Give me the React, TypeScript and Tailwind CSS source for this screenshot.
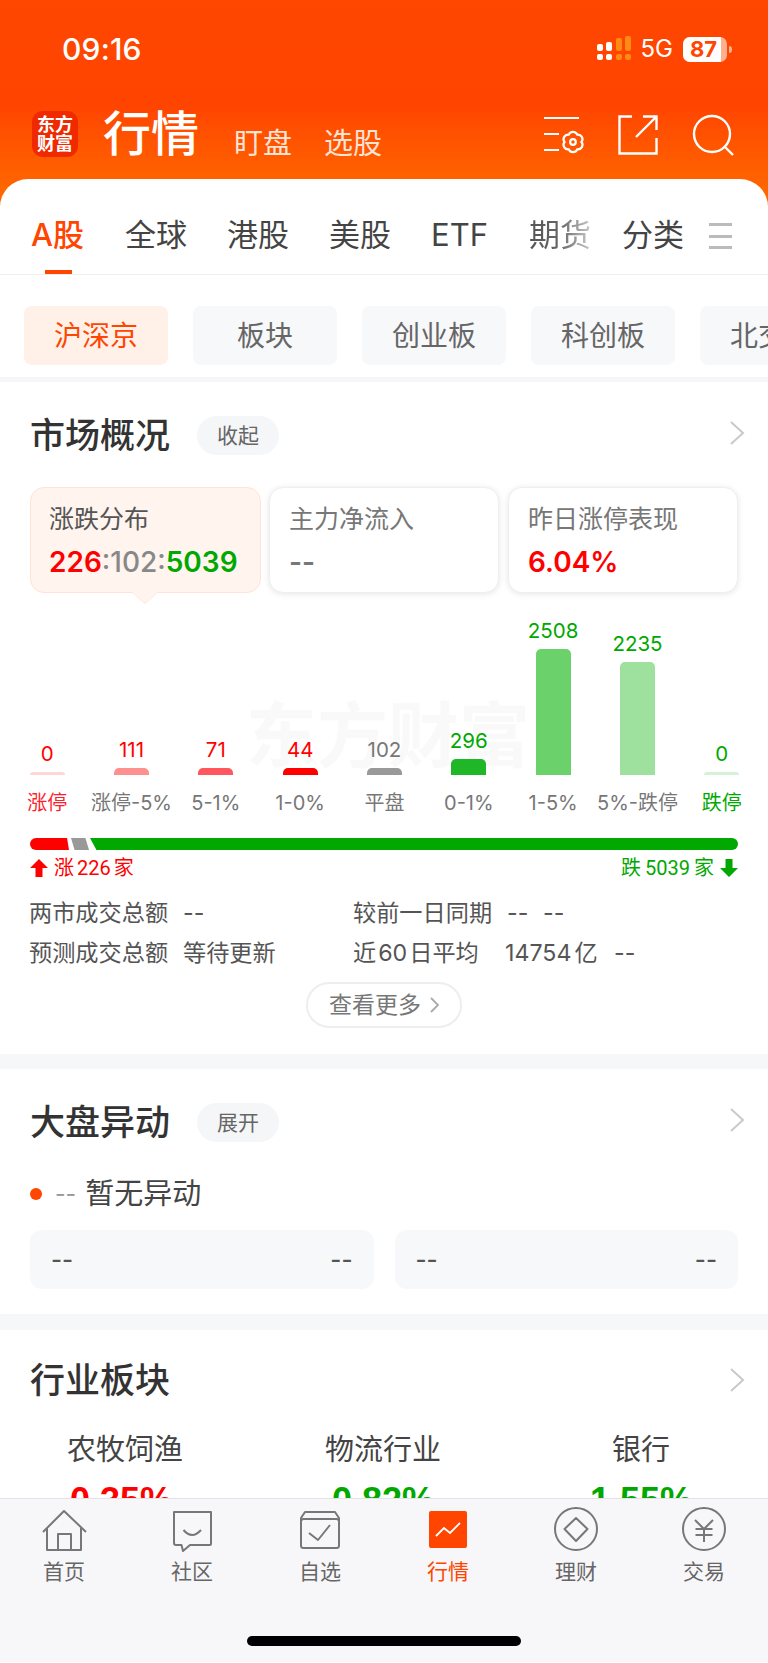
import React from "react";

const Chevron = ({ className = "" }: { className?: string }) => (
  <svg width="16" height="24" viewBox="0 0 16 24" fill="none" className={className}>
    <polyline points="2,1 14,12 2,23" stroke="#c9c9c9" strokeWidth="2" />
  </svg>
);

const SectionTitle = ({ title, pill }: { title: string; pill?: string }) => (
  <div className="flex items-center h-[38px] pl-[30px] pr-[23px]">
    <div className="text-[35px] leading-[38px] font-medium text-[#333]">{title}</div>
    {pill && (
      <div className="ml-[27px] w-[82px] h-[39px] rounded-full bg-[#f5f6f8] text-[21px] leading-[39px] text-center text-[#666]">
        {pill}
      </div>
    )}
    <Chevron className={pill ? "ml-auto -mt-[5px]" : "ml-auto"} />
  </div>
);

const chips = ["板块", "创业板", "科创板", "北交所"];

const bars = [
  { v: "0", h: 3, c: "bg-[#ffd6d6]", t: "text-[#ff0000]", l: "涨停", lc: "text-[#ff1f2d]" },
  { v: "111", h: 7, c: "bg-[#ff9090]", t: "text-[#ff0000]", l: "涨停-5%", lc: "text-[#777]" },
  { v: "71", h: 7, c: "bg-[#ff5660]", t: "text-[#ff0000]", l: "5-1%", lc: "text-[#777]" },
  { v: "44", h: 7, c: "bg-[#ff0000]", t: "text-[#ff0000]", l: "1-0%", lc: "text-[#777]" },
  { v: "102", h: 7, c: "bg-[#999999]", t: "text-[#777]", l: "平盘", lc: "text-[#777]" },
  { v: "296", h: 16, c: "bg-[#1fb728]", t: "text-[#00a800]", l: "0-1%", lc: "text-[#777]" },
  { v: "2508", h: 126, c: "bg-[#6bd16b]", t: "text-[#00a800]", l: "1-5%", lc: "text-[#777]" },
  { v: "2235", h: 113, c: "bg-[#9ee09e]", t: "text-[#00a800]", l: "5%-跌停", lc: "text-[#777]" },
  { v: "0", h: 3, c: "bg-[#d6f2d6]", t: "text-[#00a800]", l: "跌停", lc: "text-[#00a800]" },
];

const Icon = ({ children }: { children: React.ReactNode }) => (
  <svg width="48" height="48" viewBox="0 0 48 48" fill="none" stroke="#777" strokeWidth="2" strokeLinejoin="round">
    {children}
  </svg>
);

const nav: { label: string; active?: boolean; icon: React.ReactNode }[] = [
  {
    label: "首页",
    icon: (
      <Icon>
        <path d="M3 26 L24 5 L46 26" />
        <path d="M7 22 V44 H41 V22" />
        <path d="M18 44 V28 H31 V44" />
      </Icon>
    ),
  },
  {
    label: "社区",
    icon: (
      <Icon>
        <path d="M7 6 H43 V38 Q43 39 42 39 H22 L15 45 L13.500 39 H8 Q6 39 6 37 V6 Z" />
        <path d="M15.500 24 Q24 34 33 24" />
      </Icon>
    ),
  },
  {
    label: "自选",
    icon: (
      <Icon>
        <rect x="5" y="13" width="38" height="29" rx="2.500" />
        <path d="M5 15 V12 L9 6 H39 L43 12 V15" />
        <path d="M13 27 L22 34 L34 19" />
      </Icon>
    ),
  },
  {
    label: "行情",
    active: true,
    icon: (
      <svg width="48" height="48" viewBox="0 0 48 48" fill="none">
        <rect x="5" y="5" width="38" height="37" rx="2" fill="#ff4500" />
        <path d="M12 30 L20 22 L26 27 L36 17" stroke="#fff" strokeWidth="1.800" />
      </svg>
    ),
  },
  {
    label: "理财",
    icon: (
      <Icon>
        <circle cx="24" cy="23" r="21" />
        <path d="M24 12 L35.500 23 L24 35 L12.500 23 Z" />
      </Icon>
    ),
  },
  {
    label: "交易",
    icon: (
      <Icon>
        <circle cx="24" cy="23" r="21" />
        <path d="M15 14 L24 23 L33 14 M15.500 23 H32.500 M15.500 29 H32.500 M24 23 V36" />
      </Icon>
    ),
  },
];

const UpArrow = () => (
  <svg width="18" height="18" viewBox="0 0 18 18">
    <path d="M9 0 L18 9 H12.500 V18 H5.500 V9 H0 Z" fill="#ff0000" />
  </svg>
);
const DownArrow = () => (
  <svg width="18" height="18" viewBox="0 0 18 18">
    <path d="M5.500 0 H12.500 V9 H18 L9 18 L0 9 H5.500 Z" fill="#00a800" />
  </svg>
);

export default function App() {
  return (
    <div className="w-[768px] h-[1663px] overflow-hidden flex flex-col bg-white font-['Inter','Noto_Sans_CJK_SC',sans-serif]">
      <div className="h-[209px] shrink-0 bg-gradient-to-b from-[#ff4700] via-[#ff4400] via-50% to-[#ff6c00]">
        <div className="h-[98px] flex items-center pl-[62px] pr-[36px] text-white">
          <div className="text-[30px] leading-[36px] font-medium tracking-[0.2px]">09:16</div>
          <svg width="36" height="26" viewBox="0 0 36 26" className="ml-auto">
            <rect x="0" y="8" width="6" height="7" rx="2" fill="#fff" />
            <rect x="9" y="6" width="6" height="9" rx="2" fill="#fff" />
            <rect x="19" y="2" width="6" height="13" rx="2" fill="#ff8a14" />
            <rect x="28" y="0" width="6" height="15" rx="2" fill="#ff8a14" />
            <rect x="0" y="18" width="6" height="6" rx="2" fill="#fff" />
            <rect x="9" y="18" width="6" height="6" rx="2" fill="#fff" />
            <rect x="19" y="18" width="6" height="6" rx="2" fill="#ff8a14" />
            <rect x="28" y="18" width="6" height="6" rx="2" fill="#ff8a14" />
          </svg>
          <div className="ml-[8px] text-[24px] leading-[26px] font-normal">5G</div>
          <div className="ml-[10px] w-[44px] h-[25px] rounded-[7px] bg-[#ffb08c] overflow-hidden">
            <div className="w-[38px] h-[25px] pl-[3px] bg-white text-[#ff4500] text-[22px] leading-[25px] font-bold text-center">87</div>
          </div>
          <div className="ml-[2px] w-[3px] h-[7px] rounded-r-full bg-[#ffb08c]" />
        </div>
        <div className="flex items-center pl-[32px] pr-[35px] h-[60px] mt-[6px]">
          <div className="w-[46px] h-[46px] rounded-[11px] bg-[#f02a00] text-white text-[18px] leading-[19px] font-bold text-center pt-[4px]">
            东方
            <br />
            财富
          </div>
          <div className="ml-[25px] text-[48px] leading-[60px] font-medium text-white">行情</div>
          <div className="ml-[35px] mt-[20px] text-[29px] leading-[36px] text-[#ffe3d4]">盯盘</div>
          <div className="ml-[32px] mt-[20px] text-[29px] leading-[36px] text-[#ffe3d4]">选股</div>
          <svg width="42" height="42" viewBox="0 0 42 42" fill="none" stroke="#fff" strokeWidth="2.200" className="ml-auto mt-[2px]">
            <path d="M0 4 H35 M0 20 H15 M0 36 H15" />
            <g transform="translate(15 14)">
              <path d="M22.500 14 A4.600 4.600 0 0 1 18.250 21.360 A4.600 4.600 0 0 1 9.750 21.360 A4.600 4.600 0 0 1 5.500 14 A4.600 4.600 0 0 1 9.750 6.640 A4.600 4.600 0 0 1 18.250 6.640 A4.600 4.600 0 0 1 22.500 14 Z" />
              <circle cx="14" cy="14" r="2.800" />
            </g>
          </svg>
          <svg width="40" height="40" viewBox="0 0 40 40" fill="none" stroke="#fff" strokeWidth="2.400" className="ml-[32px] mr-[1px] mt-[2px]">
            <path d="M14 1.500 H1.500 V38.500 H38.500 V23" />
            <path d="M18 22 L38 2 M25 1.500 H38.500 V15" />
          </svg>
          <svg width="42" height="42" viewBox="0 0 42 42" fill="none" stroke="#fff" strokeWidth="2.400" className="ml-[33px] -mr-[1px] mt-[2px]">
            <circle cx="20" cy="20" r="18" />
            <path d="M32 32 L41 41" />
          </svg>
        </div>
      </div>

      <div className="flex-1 min-h-0 overflow-hidden -mt-[30px] rounded-t-[28px] bg-white">
        <div className="h-[96px] border-b border-[#eeeeee] flex pl-[31px] pt-[36px]">
          <div className="flex items-start">
            <div className="relative text-[31px] leading-[40px] text-[#ff4500] font-medium w-[53px]">
              A股
              <div className="absolute left-[14px] top-[55px] w-[27px] h-[4px] bg-[#ff4500]" />
            </div>
            <div className="ml-[41px] text-[31px] leading-[40px] text-[#444]">全球</div>
            <div className="ml-[40px] text-[31px] leading-[40px] text-[#444]">港股</div>
            <div className="ml-[40px] text-[31px] leading-[40px] text-[#444]">美股</div>
            <div className="ml-[40px] text-[31px] leading-[40px] text-[#444]">ETF</div>
            <div className="ml-[41px] text-[31px] leading-[40px] bg-gradient-to-r from-[#555] via-[#666] via-50% to-[#ccc] bg-clip-text text-transparent">期货</div>
            <div className="ml-[31px] text-[31px] leading-[40px] text-[#444]">分类</div>
          </div>
          <div className="ml-[25px] mt-[8px] w-[23px] h-[26px] flex flex-col justify-between">
            <div className="h-[3px] bg-[#bbb]" />
            <div className="h-[3px] bg-[#bbb]" />
            <div className="h-[3px] bg-[#bbb]" />
          </div>
        </div>

        <div className="h-[107px] border-b-[5px] border-[#f6f6f8] pt-[31px] pl-[24px] flex gap-[25px] overflow-hidden">
          <div className="w-[144px] h-[59px] shrink-0 rounded-[8px] bg-[#fff0e8] text-[#ff4500] text-[28px] leading-[61px] text-center">沪深京</div>
          {chips.map((c) => (
            <div key={c} className="w-[144px] h-[59px] shrink-0 rounded-[8px] bg-[#f7f8fa] text-[#666] text-[28px] leading-[61px] text-center">
              {c}
            </div>
          ))}
        </div>

        <section className="pt-[34px] pb-[26px]">
          <SectionTitle title="市场概况" pill="收起" />
          <div className="mt-[33px] ml-[30px] flex h-[106px]">
            <div className="relative w-[231px] rounded-[14px] border border-[#ffe3d6] bg-[#fff4ee] pl-[18px] pt-[15px]">
              <div className="text-[25px] leading-[32px] text-[#555]">涨跌分布</div>
              <div className="mt-[9px] text-[28px] leading-[36px] font-semibold whitespace-nowrap">
                <span className="text-[#ff0000]">226</span>
                <span className="text-[#888] font-medium">:102:</span>
                <span className="text-[#00a800]">5039</span>
              </div>
              <svg width="26" height="12" viewBox="0 0 26 12" className="absolute left-[101px] -bottom-[12px]">
                <path d="M0 0 L13 12 L26 0 Z" fill="#fff4ee" />
                <path d="M0 0 L11 10 Q13 12 15 10 L26 0" fill="none" stroke="#ffe9df" />
              </svg>
            </div>
            <div className="ml-[8px] w-[230px] rounded-[14px] bg-white border border-[#efefef] shadow-[0_1px_6px_rgba(0,0,0,0.1)] pl-[19px] pt-[15px]">
              <div className="text-[25px] leading-[32px] text-[#777]">主力净流入</div>
              <div className="mt-[9px] text-[28px] leading-[36px] font-semibold text-[#777]">--</div>
            </div>
            <div className="ml-[9px] w-[230px] rounded-[14px] bg-white border border-[#efefef] shadow-[0_1px_6px_rgba(0,0,0,0.1)] pl-[19px] pt-[15px]">
              <div className="text-[25px] leading-[32px] text-[#777]">昨日涨停表现</div>
              <div className="mt-[9px] text-[28px] leading-[36px] font-semibold text-[#ff0000]">6.04%</div>
            </div>
          </div>

          <div className="relative mt-[26px]">
            <div className="absolute left-[246px] top-[76px] text-[71px] leading-[80px] font-bold text-[#f9f9f9] whitespace-nowrap">东方财富</div>
            <div className="relative grid grid-cols-9 w-[759px] ml-[5px] h-[155px]">
              {bars.map((b, i) => (
                <div key={i} className="flex flex-col items-center justify-end">
                  <div className={`text-[20.500px] leading-[24px] mb-[6px] font-normal ${b.t}`}>{b.v}</div>
                  <div className={`w-[35px] rounded-t-[5px] ${b.c}`} style={{ height: b.h }} />
                </div>
              ))}
            </div>
            <div className="relative grid grid-cols-9 w-[759px] ml-[5px] mt-[17px]">
              {bars.map((b, i) => (
                <div key={i} className={`text-center text-[20px] leading-[24px] whitespace-nowrap ${b.lc}`}>
                  {b.l}
                </div>
              ))}
            </div>
          </div>

          <div className="mt-[23px] mx-[30px] h-[12px] flex w-[708px]">
            <div className="w-[39px] h-full rounded-l-full bg-[#ff0000] [clip-path:polygon(0_0,95%_0,100%_100%,0_100%)]" />
            <div className="ml-[2px] w-[18px] h-full bg-[#999] [clip-path:polygon(0_0,80%_0,100%_100%,20%_100%)]" />
            <div className="ml-[1px] flex-1 h-full rounded-r-full bg-[#00a800] [clip-path:polygon(0_0,100%_0,100%_100%,1%_100%)]" />
          </div>

          <div className="mt-[6px] mx-[30px] h-[24px] flex items-center w-[708px] text-[20px] leading-[24px] font-['Roboto','Noto_Sans_CJK_SC',sans-serif]">
            <UpArrow />
            <div className="ml-[6px] text-[#ff0000] flex gap-[3px]">
              <span>涨</span>
              <span>226</span>
              <span>家</span>
            </div>
            <div className="ml-auto text-[#00a800] flex gap-[4px]">
              <span>跌</span>
              <span>5039</span>
              <span>家</span>
            </div>
            <div className="ml-[6px]">
              <DownArrow />
            </div>
          </div>

          <div className="mt-[18px] pl-[29px] flex h-[30px] text-[23.200px] leading-[30px] text-[#555] whitespace-nowrap">
            <div className="w-[154px]">两市成交总额</div>
            <div className="w-[170px]">--</div>
            <div className="w-[154px]">较前一日同期</div>
            <div className="w-[36px]">--</div>
            <div>--</div>
          </div>
          <div className="mt-[10px] pl-[29px] flex h-[30px] text-[23.200px] leading-[30px] text-[#555] whitespace-nowrap">
            <div className="w-[154px]">预测成交总额</div>
            <div className="w-[170px]">等待更新</div>
            <div className="w-[152px] flex gap-[2px]">
              <span>近</span>
              <span>60</span>
              <span>日平均</span>
            </div>
            <div className="w-[109px] flex gap-[3px]">
              <span>14754</span>
              <span>亿</span>
            </div>
            <div>--</div>
          </div>

          <div className="mt-[14px] mx-auto w-[156px] h-[46px] rounded-full border-2 border-[#eeeeee] flex items-center pl-[21px]">
            <div className="text-[23px] leading-[30px] text-[#777]">查看更多</div>
            <svg width="9" height="16" viewBox="0 0 9 16" fill="none" className="ml-[9px]">
              <polyline points="1,1 8,8 1,15" stroke="#aaa" strokeWidth="1.800" />
            </svg>
          </div>
        </section>

        <div className="h-[15px] bg-[#f6f7f9]" />

        <section className="pt-[34px] pb-[25px]">
          <SectionTitle title="大盘异动" pill="展开" />
          <div className="mt-[35px] pl-[30px] h-[36px] flex items-center">
            <div className="w-[12px] h-[12px] rounded-full bg-[#ff4500]" />
            <div className="ml-[13px] text-[23px] leading-[36px] text-[#999]">--</div>
            <div className="ml-[9px] text-[29px] leading-[36px] text-[#444]">暂无异动</div>
          </div>
          <div className="mt-[18px] mx-[30px] grid grid-cols-2 gap-[21px]">
            {[0, 1].map((i) => (
              <div key={i} className="h-[59px] rounded-[12px] bg-[#f7f8fa] flex items-center justify-between px-[21px] text-[24px] leading-[59px] font-medium text-[#555]">
                <span>--</span>
                <span>--</span>
              </div>
            ))}
          </div>
        </section>

        <div className="h-[16px] bg-[#f6f7f9]" />

        <section className="pt-[31px]">
          <SectionTitle title="行业板块" />
          <div className="mt-[33px] -ml-[4px] w-[774px] grid grid-cols-3 text-center">
            {["农牧饲渔", "物流行业", "银行"].map((n) => (
              <div key={n} className="text-[29px] leading-[36px] text-[#444]">
                {n}
              </div>
            ))}
          </div>
          <div className="mt-[11px] -ml-[4px] w-[774px] grid grid-cols-3 text-center font-['Liberation_Sans',sans-serif] font-bold text-[36px] leading-[44px]">
            <div className="text-[#ff0000] pr-[8px]">0.35%</div>
            <div className="text-[#00a800]">0.82%</div>
            <div className="text-[#00a800]">1.55%</div>
          </div>
        </section>
      </div>

      <div className="h-[164px] shrink-0 bg-[#f7f7fa] border-t border-[#e2e2e8] mb-[1px] pt-[7px]">
        <div className="grid grid-cols-6">
          {nav.map((n) => (
            <div key={n.label} className="flex flex-col items-center">
              {n.icon}
              <div className={`mt-[6px] text-[21px] leading-[24px] ${n.active ? "text-[#ff4500]" : "text-[#666]"}`}>{n.label}</div>
            </div>
          ))}
        </div>
        <div className="mt-[52px] mx-auto w-[274px] h-[10px] rounded-full bg-black" />
      </div>
    </div>
  );
}
